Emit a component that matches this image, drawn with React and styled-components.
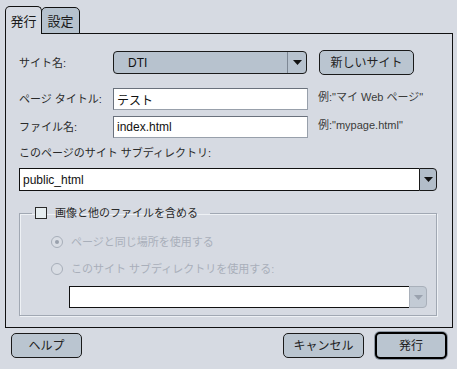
import React from "react";
import styled, { createGlobalStyle } from "styled-components";

const Global = createGlobalStyle`
  html, body { margin: 0; padding: 0; background: #d6dae2; }
  body {
    font-family: "Liberation Sans", "Noto Sans CJK JP", sans-serif;
    font-size: 11px;
    color: #222;
  }
  * { box-sizing: border-box; }
`;

const Window = styled.div`
  width: 457px;
  height: 369px;
  padding: 6px 4px 0 5px;
  display: flex;
  flex-direction: column;
  background: #d6dae2;
`;

const TabBar = styled.div`
  display: flex;
  align-items: flex-end;
  height: 28px;
  margin-bottom: -1px;
`;

const Tab = styled.div`
  position: relative;
  z-index: ${(p) => (p.$active ? 2 : 1)};
  height: ${(p) => (p.$active ? 28 : 27)}px;
  width: ${(p) => (p.$active ? 37 : 39)}px;
  margin-left: ${(p) => (p.$active ? 0 : -1)}px;
  border: 1px solid #111;
  border-bottom: ${(p) => (p.$active ? "none" : "1px solid #111")};
  border-radius: 5px 5px 0 0;
  background: ${(p) => (p.$active ? "#d6dae2" : "#b6c2ce")};
  display: flex;
  align-items: center;
  justify-content: center;
  font-size: 13px;
  color: #1a1a1a;
  padding-bottom: 1px;
`;

const Panel = styled.div`
  height: 295px;
  border: 1px solid #111;
  padding: 16px 15px 0 13px;
  display: flex;
  flex-direction: column;
`;

const FormRow = styled.div`
  display: grid;
  grid-template-columns: 94px 195px 1fr;
  align-items: center;
  margin-top: ${(p) => p.$mt || 0}px;
  height: ${(p) => p.$h || 22}px;
`;

const Label = styled.div`
  font-size: 11px;
  color: ${(p) => (p.$disabled ? "#a9afba" : "#2a2a2a")};
  white-space: nowrap;
  line-height: 14px;
  margin-top: ${(p) => p.$mt || 0}px;
`;

const Hint = styled.div`
  font-size: 11px;
  color: #3a3a3a;
  white-space: nowrap;
  align-self: start;
  padding-left: 10px;
`;

const Side = styled.div`
  padding-left: 11px;
`;

const PopupButton = styled.div`
  height: 23px;
  width: 194px;
  border: 1px solid #1a1a1a;
  border-radius: 4px;
  background: #b7c2ce;
  display: flex;
  align-items: stretch;
  font-size: 12px;
  color: #111;
`;

const PopupValue = styled.div`
  flex: 1;
  display: flex;
  align-items: center;
  padding-left: 14px;
`;

const ArrowCell = styled.div`
  width: 19px;
  border-left: 1px solid #7d8794;
  display: flex;
  align-items: center;
  justify-content: center;
`;

const Button = styled.button`
  height: ${(p) => (p.$default ? 27 : 25)}px;
  width: ${(p) => p.$w}px;
  border: ${(p) => (p.$default ? "2px solid #000" : "1px solid #1a1a1a")};
  border-radius: 5px;
  background: #bac5d0;
  box-shadow: ${(p) => (p.$default ? "0 0 0 1px #8e98a4" : "none")};
  font-family: inherit;
  font-size: 12px;
  color: #222;
  padding: 0 0 3px;
  display: flex;
  align-items: center;
  justify-content: center;
  cursor: default;
`;

const TextField = styled.div`
  height: 22px;
  width: 195px;
  background: #fff;
  border: 1px solid #98a0ab;
  border-top-color: #6a717c;
  border-left-color: #6a717c;
  font-size: 12px;
  color: #111;
  padding-left: 3px;
  display: flex;
  align-items: center;
`;

const Combo = styled.div`
  height: ${(p) => p.$h || 23}px;
  display: flex;
  align-items: stretch;
  margin-top: ${(p) => p.$mt || 0}px;
  margin-left: ${(p) => p.$ml || 0}px;
`;

const ComboField = styled.div`
  flex: 1;
  background: #fff;
  border: 1px solid #111;
  border-right: none;
  font-size: 12px;
  color: #111;
  padding-left: 3px;
  display: flex;
  align-items: center;
`;

const ComboButton = styled.div`
  width: 18px;
  border: 1px solid ${(p) => (p.$disabled ? "#a9b0ba" : "#1a1a1a")};
  border-radius: 0 4px 4px 0;
  background: ${(p) => (p.$disabled ? "#c3cbd5" : "#b2bdc9")};
  display: flex;
  align-items: center;
  justify-content: center;
`;

const Group = styled.fieldset`
  margin: 15px 0 0 0;
  height: 110px;
  border: 1px solid #a1a8b3;
  box-shadow: inset 1px 1px 0 #eef1f5, 1px 1px 0 #eef1f5;
  padding: 0 9px 0 12px;
  display: flex;
  flex-direction: column;
`;

const Legend = styled.legend`
  margin-left: 0;
  padding: 0 12px 0 3px;
  display: flex;
  align-items: center;
  gap: 8px;
  font-size: 11px;
  color: #2a2a2a;
  line-height: 14px;
`;

const CheckBox = styled.span`
  width: 12px;
  height: 12px;
  border: 1px solid #2a2a2a;
  background: #e6edf0;
  display: inline-block;
`;

const RadioRow = styled.div`
  display: flex;
  align-items: center;
  gap: 8px;
  height: 16px;
  margin-top: ${(p) => p.$mt || 0}px;
  margin-left: 19px;
`;

const Radio = styled.span`
  width: 12px;
  height: 12px;
  border-radius: 50%;
  border: 1px solid #a7aeb9;
  background: #d9dde4;
  display: inline-flex;
  align-items: center;
  justify-content: center;
  &::after {
    content: "";
    width: 4px;
    height: 4px;
    border-radius: 50%;
    background: ${(p) => (p.$checked ? "#9aa1ad" : "transparent")};
  }
`;

const Footer = styled.div`
  display: flex;
  align-items: center;
  padding: 0 6px 0 6px;
  margin-top: 4px;
  gap: 11px;
`;

const Spacer = styled.div`
  flex: 1;
`;

const Arrow = ({ color = "#111" }) => (
  <svg width="9" height="5" viewBox="0 0 9 5">
    <path d="M0 0 H9 L4.5 5 Z" fill={color} />
  </svg>
);

export default function App() {
  return (
    <>
      <Global />
      <Window>
        <TabBar>
          <Tab $active>発行</Tab>
          <Tab>設定</Tab>
        </TabBar>
        <Panel>
          <FormRow $h={25}>
            <Label>サイト名:</Label>
            <PopupButton>
              <PopupValue>DTI</PopupValue>
              <ArrowCell>
                <Arrow />
              </ArrowCell>
            </PopupButton>
            <Side>
              <Button $w={95}>新しいサイト</Button>
            </Side>
          </FormRow>
          <FormRow $mt={13}>
            <Label>ページ タイトル:</Label>
            <TextField>テスト</TextField>
            <Hint>例:"マイ Web ページ"</Hint>
          </FormRow>
          <FormRow $mt={6}>
            <Label>ファイル名:</Label>
            <TextField>index.html</TextField>
            <Hint>例:"mypage.html"</Hint>
          </FormRow>
          <Label $mt={8}>このページのサイト サブディレクトリ:</Label>
          <Combo $mt={8}>
            <ComboField>public_html</ComboField>
            <ComboButton>
              <Arrow />
            </ComboButton>
          </Combo>
          <Group>
            <Legend>
              <CheckBox />
              画像と他のファイルを含める
            </Legend>
            <RadioRow $mt={14}>
              <Radio $checked />
              <Label $disabled>ページと同じ場所を使用する</Label>
            </RadioRow>
            <RadioRow $mt={11}>
              <Radio />
              <Label $disabled>このサイト サブディレクトリを使用する:</Label>
            </RadioRow>
            <Combo $h={22} $mt={9} $ml={37}>
              <ComboField />
              <ComboButton $disabled>
                <Arrow color="#9aa2ae" />
              </ComboButton>
            </Combo>
          </Group>
        </Panel>
        <Footer>
          <Button $w={71}>ヘルプ</Button>
          <Spacer />
          <Button $w={81}>キャンセル</Button>
          <Button $w={72} $default>
            発行
          </Button>
        </Footer>
      </Window>
    </>
  );
}
